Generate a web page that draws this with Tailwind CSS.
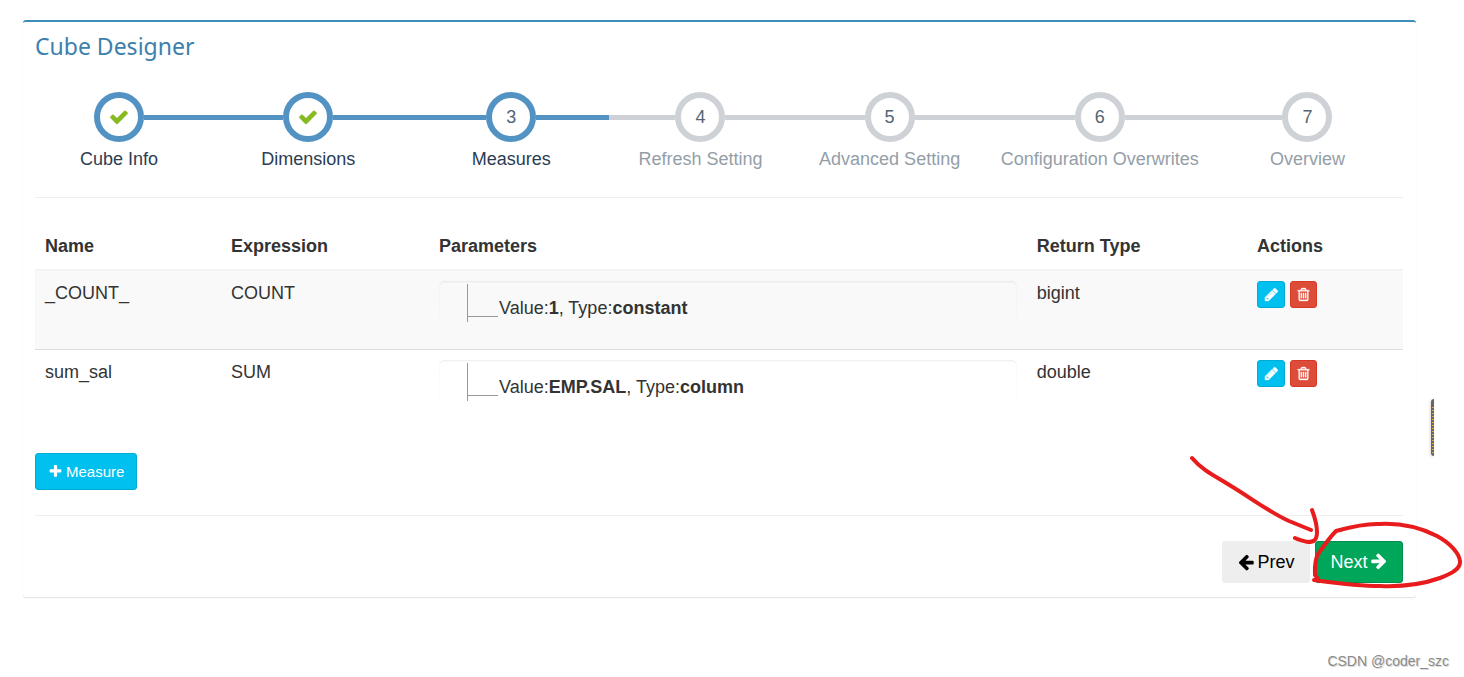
<!DOCTYPE html>
<html lang="en">
<head>
<meta charset="utf-8">
<meta name="viewport" content="width=device-width, initial-scale=1">
<title>Cube Designer</title>
<script src="https://cdn.jsdelivr.net/npm/@tailwindcss/browser@4"></script>
</head>
<body class="relative overflow-x-hidden bg-white pt-5 font-['Liberation_Sans',Arial,sans-serif] text-[18px] leading-[25px] text-[#333]">
<!-- Font Awesome glyph shapes -->
<svg class="hidden" aria-hidden="true">
  <symbol id="check" viewBox="0 0 1792 1792"><path d="M1671 566q0 40-28 68l-724 724-136 136q-28 28-68 28t-68-28l-136-136-362-362q-28-28-28-68t28-68l136-136q28-28 68-28t68 28l294 295 656-657q28-28 68-28t68 28l136 136q28 28 28 68z"/></symbol>
  <symbol id="plus" viewBox="0 0 1792 1792"><path d="M1600 736v192q0 40-28 68t-68 28h-416v416q0 40-28 68t-68 28h-192q-40 0-68-28t-28-68v-416h-416q-40 0-68-28t-28-68v-192q0-40 28-68t68-28h416v-416q0-40 28-68t68-28h192q40 0 68 28t28 68v416h416q40 0 68 28t28 68z"/></symbol>
  <symbol id="pencil" viewBox="0 0 1792 1792"><path d="M491 1536l91-91-235-235-91 91v107h128v128h107zm523-928q0-22-22-22-10 0-17 7l-542 542q-7 7-7 17 0 22 22 22 10 0 17-7l542-542q7-7 7-17zm-54-192l416 416-832 832h-416v-416zm683 96q0 53-37 90l-166 166-416-416 166-165q36-38 90-38 53 0 91 38l235 234q37 39 37 91z"/></symbol>
  <symbol id="trash" viewBox="0 0 1792 1792"><path d="M704 736v576q0 14-9 23t-23 9h-64q-14 0-23-9t-9-23v-576q0-14 9-23t23-9h64q14 0 23 9t9 23zm256 0v576q0 14-9 23t-23 9h-64q-14 0-23-9t-9-23v-576q0-14 9-23t23-9h64q14 0 23 9t9 23zm256 0v576q0 14-9 23t-23 9h-64q-14 0-23-9t-9-23v-576q0-14 9-23t23-9h64q14 0 23 9t9 23zm128 724v-948h-896v948q0 22 7 40.500t14.500 27 10.500 8.500h832q3 0 10.500-8.500t14.500-27 7-40.500zm-672-1076h448l-48-117q-7-9-17-11h-317q-10 2-17 11zm928 32v64q0 14-9 23t-23 9h-96v948q0 83-47 143.500t-113 60.500h-832q-66 0-113-58.500t-47-141.500v-952h-96q-14 0-23-9t-9-23v-64q0-14 9-23t23-9h309l70-167q15-37 54-63t79-26h320q40 0 79 26t54 63l70 167h309q14 0 23 9t9 23z"/></symbol>
  <symbol id="arrow" viewBox="0 0 1792 1792"><path d="M1664 896v128q0 53-32.500 90.500t-84.500 37.500h-704l293 294q38 36 38 90t-38 90l-75 76q-37 37-90 37-52 0-91-37l-651-652q-37-37-37-90 0-52 37-91l651-650q38-38 91-38 52 0 90 38l75 74q38 38 38 91t-38 91l-293 293h704q52 0 84.500 37.500t32.500 90.500z"/></symbol>
</svg>

<main class="ml-[23px] mr-12 rounded-[3px] border-t-2 border-[#3c8dbc] pr-[13px] pb-[14px] pl-3 shadow-[0_1px_1px_rgba(0,0,0,0.12)]">
  <h1 class="pt-[7px] font-['Noto_Sans','Open_Sans',sans-serif] text-[23px] leading-[34px] text-[#3c80ae]">Cube Designer</h1>

  <ol class="grid grid-cols-[168fr_210fr_196fr_182fr_196fr_224fr_191fr] border-b border-[#eee] pt-[29px] pb-[25px] text-center text-[#2b3d53]">
    <li class="flex flex-col">
      <div class="flex items-center"><span class="flex-1"></span><span class="flex size-[50px] items-center justify-center rounded-full border-6 border-[#5293c4] bg-white"><svg class="size-5 fill-[#87ba21] stroke-[#87ba21] stroke-[40]" role="img" aria-label="Done"><use href="#check"/></svg></span><span class="h-[5px] flex-1 bg-[#5293c4]"></span></div>
      <span class="mt-[5px] whitespace-nowrap">Cube Info</span>
    </li>
    <li class="flex flex-col">
      <div class="flex items-center"><span class="h-[5px] flex-1 bg-[#5293c4]"></span><span class="flex size-[50px] items-center justify-center rounded-full border-6 border-[#5293c4] bg-white"><svg class="size-5 fill-[#87ba21] stroke-[#87ba21] stroke-[40]" role="img" aria-label="Done"><use href="#check"/></svg></span><span class="h-[5px] flex-1 bg-[#5293c4]"></span></div>
      <span class="mt-[5px] whitespace-nowrap">Dimensions</span>
    </li>
    <li class="flex flex-col" aria-current="step">
      <div class="flex items-center"><span class="h-[5px] flex-1 bg-[#5293c4]"></span><span class="flex size-[50px] items-center justify-center rounded-full border-6 border-[#5293c4] bg-white text-[#546474]">3</span><span class="h-[5px] flex-1 bg-[#5293c4]"></span></div>
      <span class="mt-[5px] whitespace-nowrap">Measures</span>
    </li>
    <li class="flex flex-col">
      <div class="flex items-center"><span class="h-[5px] flex-1 bg-[#ced1d6]"></span><span class="flex size-[50px] items-center justify-center rounded-full border-6 border-[#ced1d6] bg-white text-[#546474]">4</span><span class="h-[5px] flex-1 bg-[#ced1d6]"></span></div>
      <span class="mt-[5px] whitespace-nowrap text-[#949ea7]">Refresh Setting</span>
    </li>
    <li class="flex flex-col">
      <div class="flex items-center"><span class="h-[5px] flex-1 bg-[#ced1d6]"></span><span class="flex size-[50px] items-center justify-center rounded-full border-6 border-[#ced1d6] bg-white text-[#546474]">5</span><span class="h-[5px] flex-1 bg-[#ced1d6]"></span></div>
      <span class="mt-[5px] whitespace-nowrap text-[#949ea7]">Advanced Setting</span>
    </li>
    <li class="flex flex-col">
      <div class="flex items-center"><span class="h-[5px] flex-1 bg-[#ced1d6]"></span><span class="flex size-[50px] items-center justify-center rounded-full border-6 border-[#ced1d6] bg-white text-[#546474]">6</span><span class="h-[5px] flex-1 bg-[#ced1d6]"></span></div>
      <span class="mt-[5px] whitespace-nowrap text-[#949ea7]">Configuration Overwrites</span>
    </li>
    <li class="flex flex-col">
      <div class="flex items-center"><span class="h-[5px] flex-1 bg-[#ced1d6]"></span><span class="flex size-[50px] items-center justify-center rounded-full border-6 border-[#ced1d6] bg-white text-[#546474]">7</span><span class="flex-1"></span></div>
      <span class="mt-[5px] whitespace-nowrap text-[#949ea7]">Overview</span>
    </li>
  </ol>

  <table class="mt-[26px] w-full table-fixed text-left align-top">
    <colgroup><col class="w-[13.6%]"><col class="w-[15.2%]"><col class="w-[43.7%]"><col class="w-[16.1%]"><col></colgroup>
    <thead>
      <tr class="border-b-2 border-[#f4f4f4]">
        <th scope="col" class="px-[10px] py-[10px]">Name</th>
        <th scope="col" class="px-[10px] py-[10px]">Expression</th>
        <th scope="col" class="px-[10px] py-[10px]">Parameters</th>
        <th scope="col" class="px-[10px] py-[10px]">Return Type</th>
        <th scope="col" class="px-[10px] py-[10px]">Actions</th>
      </tr>
    </thead>
    <tbody class="align-top">
      <tr class="border-b border-[#ddd] bg-[#f9f9f9]">
        <td class="p-[10px]">_COUNT_</td>
        <td class="p-[10px]">COUNT</td>
        <td class="p-[10px]">
          <div class="relative h-[58px] pt-[3px] pl-[28px]">
            <div class="absolute inset-0 rounded-t-[5px] shadow-[inset_0_1px_2px_rgba(0,0,0,0.08)] mask-b-from-20%"></div>
            <div class="flex h-[38px] border-l border-[#999]"><span class="mt-8 w-[30px] border-t border-[#999]"></span><span class="mt-3 ml-px">Value:<b>1</b>, Type:<b>constant</b></span></div>
          </div>
        </td>
        <td class="p-[10px]">bigint</td>
        <td class="p-[10px]">
          <div class="flex gap-[5px]">
            <button type="button" aria-label="Edit _COUNT_" class="flex h-[27px] w-7 items-center justify-center rounded-[3px] border border-[#00acd6] bg-[#00c0ef]"><svg class="size-[15px] fill-white stroke-white stroke-[50]"><use href="#pencil"/></svg></button>
            <button type="button" aria-label="Delete _COUNT_" class="flex size-[27px] items-center justify-center rounded-[3px] border border-[#d73925] bg-[#dd4b39]"><svg class="size-[15px] fill-white stroke-white stroke-[40]"><use href="#trash"/></svg></button>
          </div>
        </td>
      </tr>
      <tr>
        <td class="p-[10px]">sum_sal</td>
        <td class="p-[10px]">SUM</td>
        <td class="p-[10px]">
          <div class="relative h-[58px] pt-[3px] pl-[28px]">
            <div class="absolute inset-0 rounded-t-[5px] shadow-[inset_0_1px_2px_rgba(0,0,0,0.08)] mask-b-from-20%"></div>
            <div class="flex h-[38px] border-l border-[#999]"><span class="mt-8 w-[30px] border-t border-[#999]"></span><span class="mt-3 ml-px">Value:<b>EMP.SAL</b>, Type:<b>column</b></span></div>
          </div>
        </td>
        <td class="p-[10px]">double</td>
        <td class="p-[10px]">
          <div class="flex gap-[5px]">
            <button type="button" aria-label="Edit sum_sal" class="flex h-[27px] w-7 items-center justify-center rounded-[3px] border border-[#00acd6] bg-[#00c0ef]"><svg class="size-[15px] fill-white stroke-white stroke-[50]"><use href="#pencil"/></svg></button>
            <button type="button" aria-label="Delete sum_sal" class="flex size-[27px] items-center justify-center rounded-[3px] border border-[#d73925] bg-[#dd4b39]"><svg class="size-[15px] fill-white stroke-white stroke-[40]"><use href="#trash"/></svg></button>
          </div>
        </td>
      </tr>
    </tbody>
  </table>

  <div class="border-b border-[#eee] pt-[25px] pb-[25px]">
    <button type="button" class="flex h-[37px] items-center gap-[3px] rounded-[3px] border border-[#00acd6] bg-[#00c0ef] px-3 text-[15px] text-white"><svg class="size-[15px] fill-current" aria-hidden="true"><use href="#plus"/></svg>Measure</button>
  </div>

  <div class="flex justify-end gap-[5px] pt-[25px]">
    <button type="button" class="flex h-[42px] w-[88px] items-center justify-center gap-0.5 rounded-[3px] bg-[#eee] text-black"><svg class="size-[18px] fill-current" aria-hidden="true"><use href="#arrow"/></svg>Prev</button>
    <div class="relative">
      <button type="button" class="flex h-[42px] w-[88px] items-center justify-center gap-0.5 rounded-[3px] border border-[#008d4c] bg-[#00a65a] text-white">Next<svg class="size-[18px] rotate-180 fill-current" aria-hidden="true"><use href="#arrow"/></svg></button>
      <!-- Hand-drawn arrow and ring around the Next button -->
      <svg class="pointer-events-none absolute -top-[101px] -left-[145px] h-[160px] w-[294px] fill-none stroke-[#e81c1c] stroke-4" viewBox="1170 440 294 160" stroke-linecap="round" stroke-linejoin="round" aria-hidden="true">
        <path d="M1192 458C1203 471 1217 477 1231 486C1251 498 1269 512 1289 521L1311 530"/>
        <path d="M1312 510C1315 518 1317 525 1317 532C1317 541 1313 542 1308 542C1303 541 1299 540 1295 538"/>
        <path d="M1314 580C1336 583 1356 586 1380 586C1403 587 1423 584 1440 578C1451 574 1461 569 1460 561C1459 553 1450 543 1437 536C1421 528 1401 523 1380 524C1364 523 1347 528 1336 531C1330 537 1323 547 1318 554C1314 562 1315 570 1315 575L1318 579"/>
      </svg>
    </div>
  </div>
</main>

<p class="mt-[52px] pr-[15px] text-right text-[14px] text-[#8a8a8a] [text-shadow:1px_1px_0_#ddd]">CSDN @coder_szc</p>

<!-- Edge of a floating handle at the right of the page -->
<div class="absolute top-[399px] right-[30px] h-[57px] w-[3px] rounded-l-[3px] bg-[#666] pt-2 pl-px shadow-[-1px_1px_3px_rgba(0,0,0,0.15)]"><div class="h-[46px] bg-[repeating-linear-gradient(#e8a33d_0_1px,#666_1px_3px)]"></div></div>
</body>
</html>
